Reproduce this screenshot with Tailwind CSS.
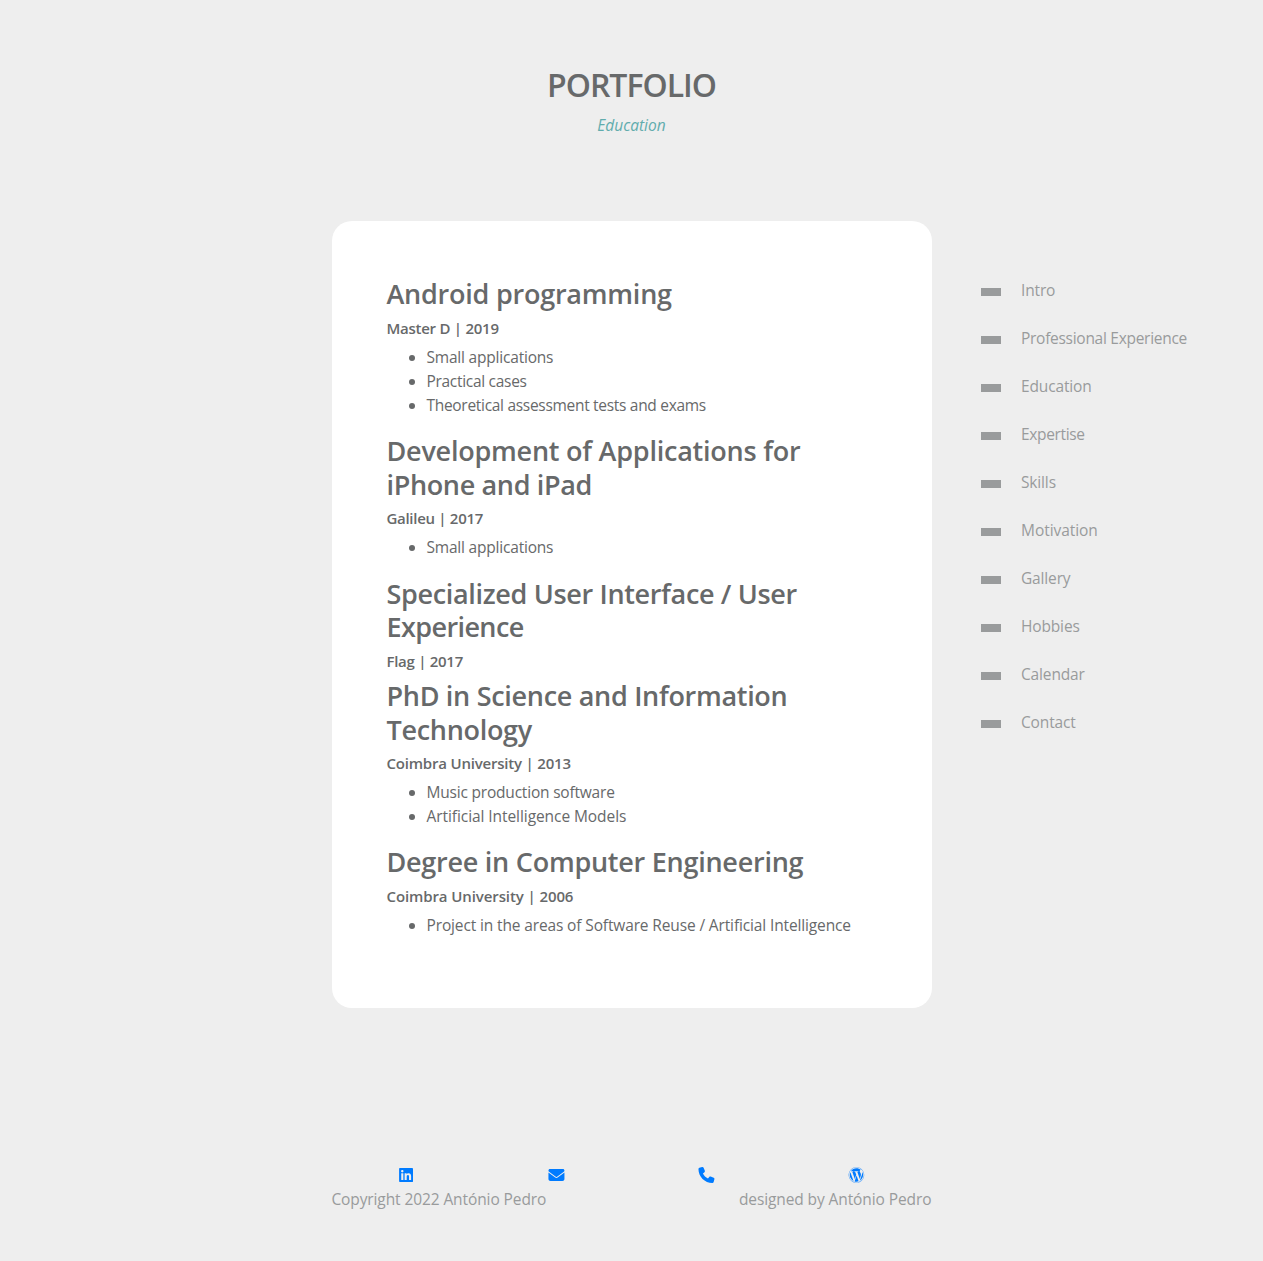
<!DOCTYPE html>
<html lang="en">
<head>
<meta charset="utf-8">
<title>Portfolio - Education</title>
<script src="https://cdn.jsdelivr.net/npm/@tailwindcss/browser@4"></script>
</head>
<body class="bg-[#eeeeee] font-['Open_Sans',sans-serif] text-[15.5px] text-[#67696a]">
<div class="flex h-[1261px] flex-col overflow-hidden">
  <header class="flex h-[221px] flex-col items-center pt-[66px]">
    <h1 class="text-[32px] leading-[38px] font-semibold tracking-[-1px]">PORTFOLIO</h1>
    <p class="mt-[9px] leading-6 text-[#61acad] italic">Education</p>
  </header>
  <div class="flex pl-[332px]">
    <main class="h-[787px] w-[600px] shrink-0 rounded-[20px] bg-white pt-[56.4px] pl-[54.5px] whitespace-nowrap">
      <h2 class="mb-[7.6px] text-[27px] leading-[33.6px] font-semibold tracking-[-0.23px]">Android programming</h2>
      <h3 class="mb-[7px] text-[15px] leading-[19.2px] font-semibold tracking-[-0.26px]">Master D | 2019</h3>
      <ul class="mb-[17.4px] list-disc pl-10 leading-6">
        <li class="tracking-[-0.2px]">Small applications</li><li class="tracking-[-0.3px]">Practical cases</li><li class="tracking-[-0.3px]">Theoretical assessment tests and exams</li>
      </ul>
      <h2 class="mb-[7.6px] text-[27px] leading-[33.6px] font-semibold tracking-[-0.23px]">Development of Applications for<br><span class="tracking-[-0.35px]">iPhone and iPad</span></h2>
      <h3 class="mb-[7px] text-[15px] leading-[19.2px] font-semibold tracking-[-0.3px]">Galileu | 2017</h3>
      <ul class="mb-[17.4px] list-disc pl-10 leading-6 tracking-[-0.2px]"><li>Small applications</li></ul>
      <h2 class="mb-2 text-[27px] leading-[33.6px] font-semibold tracking-[-0.33px]">Specialized User Interface / User<br><span class="tracking-[-0.6px]">Experience</span></h2>
      <h3 class="mb-2 text-[15px] leading-[19.2px] font-semibold tracking-[-0.28px]">Flag | 2017</h3>
      <h2 class="mb-[7.6px] text-[27px] leading-[33.6px] font-semibold tracking-[-0.3px]">PhD in Science and Information<br>Technology</h2>
      <h3 class="mb-[7px] text-[15px] leading-[19.2px] font-semibold tracking-[-0.2px]">Coimbra University | 2013</h3>
      <ul class="mb-[17.4px] list-disc pl-10 leading-6"><li class="tracking-[-0.2px]">Music production software</li><li class="tracking-[-0.07px]">Artificial Intelligence Models</li></ul>
      <h2 class="mb-[7.6px] text-[27px] leading-[33.6px] font-semibold tracking-[-0.25px]">Degree in Computer Engineering</h2>
      <h3 class="mb-[7px] text-[15px] leading-[19.2px] font-semibold tracking-[-0.1px]">Coimbra University | 2006</h3>
      <ul class="list-disc pl-10 leading-6 tracking-[-0.135px]"><li>Project in the areas of Software Reuse / Artificial Intelligence</li></ul>
    </main>
    <nav class="ml-[49px] pt-[57px] whitespace-nowrap text-[#999b9c]">
      <ul class="flex flex-col gap-6 leading-6 tracking-[-0.15px]">
        <li class="flex items-center gap-5"><span class="mt-1 h-2 w-5 bg-[#999b9c]"></span><a>Intro</a></li>
        <li class="flex items-center gap-5"><span class="mt-1 h-2 w-5 bg-[#999b9c]"></span><a class="tracking-[-0.28px]">Professional Experience</a></li>
        <li class="flex items-center gap-5"><span class="mt-1 h-2 w-5 bg-[#999b9c]"></span><a>Education</a></li>
        <li class="flex items-center gap-5"><span class="mt-1 h-2 w-5 bg-[#999b9c]"></span><a class="tracking-[-0.35px]">Expertise</a></li>
        <li class="flex items-center gap-5"><span class="mt-1 h-2 w-5 bg-[#999b9c]"></span><a>Skills</a></li>
        <li class="flex items-center gap-5"><span class="mt-1 h-2 w-5 bg-[#999b9c]"></span><a class="tracking-[-0.05px]">Motivation</a></li>
        <li class="flex items-center gap-5"><span class="mt-1 h-2 w-5 bg-[#999b9c]"></span><a>Gallery</a></li>
        <li class="flex items-center gap-5"><span class="mt-1 h-2 w-5 bg-[#999b9c]"></span><a>Hobbies</a></li>
        <li class="flex items-center gap-5"><span class="mt-1 h-2 w-5 bg-[#999b9c]"></span><a>Calendar</a></li>
        <li class="flex items-center gap-5"><span class="mt-1 h-2 w-5 bg-[#999b9c]"></span><a>Contact</a></li>
      </ul>
    </nav>
  </div>
  <footer class="mt-[155px] ml-[331.4px] w-[600px] text-[#999b9c]">
    <div class="grid h-6 grid-cols-4 items-center justify-items-center text-[#007bff]">
      <svg class="h-4 w-[14px]" viewBox="-3 0 448 512" fill="currentColor"><path d="M416 32H31.9C14.3 32 0 46.5 0 64.3v383.4C0 465.5 14.3 480 31.9 480H416c17.6 0 32-14.5 32-32.3V64.3c0-17.8-14.4-32.3-32-32.3zM135.4 416H69V202.2h66.5V416zm-33.2-243c-21.3 0-38.5-17.3-38.5-38.5S80.9 96 102.2 96c21.2 0 38.5 17.3 38.5 38.5 0 21.3-17.2 38.5-38.5 38.5zm282.1 243h-66.4V312c0-24.8-.5-56.7-34.5-56.7-34.6 0-39.9 27-39.9 54.9V416h-66.4V202.2h63.7v29.2h.9c8.9-16.8 30.6-34.5 62.9-34.5 67.2 0 79.7 44.3 79.7 101.9V416z"/></svg>
      <svg class="size-4 overflow-visible" viewBox="-14 0 512 512" fill="currentColor"><path d="M48 64C21.5 64 0 85.5 0 112c0 15.1 7.1 29.3 19.2 38.4L236.8 313.6c11.4 8.5 27 8.5 38.4 0L492.8 150.4c12.1-9.1 19.2-23.3 19.2-38.4c0-26.5-21.5-48-48-48H48zM0 176V384c0 35.3 28.7 64 64 64H448c35.3 0 64-28.7 64-64V176L294.4 339.2c-22.8 17.1-54 17.1-76.8 0L0 176z"/></svg>
      <svg class="size-4 overflow-visible" viewBox="-14 0 512 512" fill="currentColor"><path d="M164.9 24.6c-7.7-18.6-28-28.5-47.4-23.2l-88 24C12.1 30.2 0 46 0 64C0 311.4 200.6 512 448 512c18 0 33.8-12.1 38.6-29.5l24-88c5.3-19.4-4.6-39.7-23.2-47.4l-96-40c-16.3-6.8-35.2-2.1-46.3 11.6L304.7 368C234.3 334.7 177.3 277.7 144 207.3L193.3 167c13.7-11.2 18.4-30 11.6-46.3l-40-96z"/></svg>
      <svg class="size-4 overflow-visible" viewBox="-14 0 512 512" fill="currentColor"><path d="M61.7 169.4l101.5 278C92.2 413 43.3 340.2 43.3 256c0-30.9 6.6-60.1 18.4-86.6zm337.9 75.9c0-26.3-9.4-44.5-17.5-58.7-10.8-17.5-20.9-32.4-20.9-49.9 0-19.6 14.8-37.8 35.7-37.8.9 0 1.8.1 2.8.2-37.9-34.7-88.3-55.9-143.7-55.9-74.3 0-139.7 38.1-177.8 95.9 5 .2 9.7.3 13.7.3 22.2 0 56.7-2.7 56.7-2.7 11.5-.7 12.8 16.2 1.4 17.5 0 0-11.5 1.3-24.3 2l77.5 230.4L249.8 247l-33.1-90.8c-11.5-.7-22.3-2-22.3-2-11.5-.7-10.1-18.2 1.3-17.5 0 0 35.1 2.7 56 2.7 22.2 0 56.7-2.7 56.7-2.7 11.5-.7 12.8 16.2 1.4 17.5 0 0-11.5 1.3-24.3 2l76.9 228.7 21.2-70.9c9-29.4 16-50.5 16-68.7zm-139.9 29.3l-63.8 185.5c19.1 5.6 39.2 8.7 60.1 8.7 24.8 0 48.5-4.3 70.6-12.1-.6-.9-1.1-1.9-1.5-2.9l-65.4-179.2zm183-120.7c.9 6.8 1.4 14 1.4 21.9 0 21.6-4 45.8-16.2 76.2l-65 187.9C426.2 403 468.7 334.5 468.7 256c0-37-9.4-71.8-26-102.1zM504 256c0 136.8-111.3 248-248 248C119.2 504 8 392.7 8 256 8 119.2 119.2 8 256 8c136.7 0 248 111.2 248 248zm-11.4 0c0-130.5-106.2-236.6-236.6-236.6C125.5 19.4 19.4 125.5 19.4 256S125.6 492.6 256 492.6c130.5 0 236.6-106.1 236.6-236.6z"/></svg>
    </div>
    <div class="flex justify-between leading-6 tracking-[-0.1px] whitespace-nowrap"><p>Copyright 2022 António Pedro</p><p>designed by António Pedro</p></div>
  </footer>
</div>
</body>
</html>
